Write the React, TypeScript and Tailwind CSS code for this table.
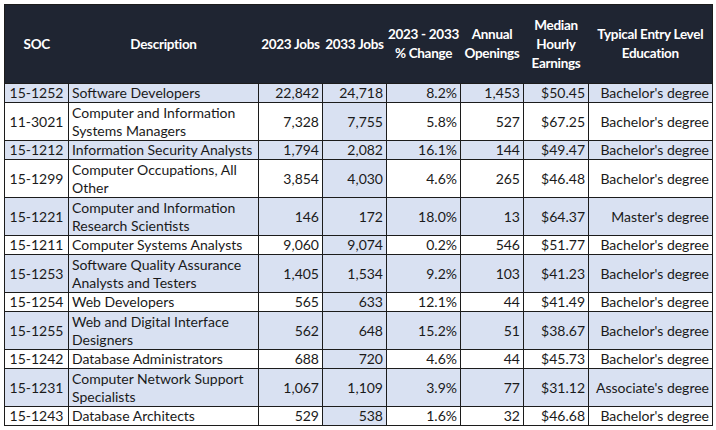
import React from "react";

type Row = {
  soc: string;
  desc: string[];
  jobs23: string;
  jobs33: string;
  change: string;
  openings: string;
  earnings: string;
  education: string;
};

const rows: Row[] = [
  { soc: "15-1252", desc: ["Software Developers"], jobs23: "22,842", jobs33: "24,718", change: "8.2%", openings: "1,453", earnings: "$50.45", education: "Bachelor's degree" },
  { soc: "11-3021", desc: ["Computer and Information", "Systems Managers"], jobs23: "7,328", jobs33: "7,755", change: "5.8%", openings: "527", earnings: "$67.25", education: "Bachelor's degree" },
  { soc: "15-1212", desc: ["Information Security Analysts"], jobs23: "1,794", jobs33: "2,082", change: "16.1%", openings: "144", earnings: "$49.47", education: "Bachelor's degree" },
  { soc: "15-1299", desc: ["Computer Occupations, All", "Other"], jobs23: "3,854", jobs33: "4,030", change: "4.6%", openings: "265", earnings: "$46.48", education: "Bachelor's degree" },
  { soc: "15-1221", desc: ["Computer and Information", "Research Scientists"], jobs23: "146", jobs33: "172", change: "18.0%", openings: "13", earnings: "$64.37", education: "Master's degree" },
  { soc: "15-1211", desc: ["Computer Systems Analysts"], jobs23: "9,060", jobs33: "9,074", change: "0.2%", openings: "546", earnings: "$51.77", education: "Bachelor's degree" },
  { soc: "15-1253", desc: ["Software Quality Assurance", "Analysts and Testers"], jobs23: "1,405", jobs33: "1,534", change: "9.2%", openings: "103", earnings: "$41.23", education: "Bachelor's degree" },
  { soc: "15-1254", desc: ["Web Developers"], jobs23: "565", jobs33: "633", change: "12.1%", openings: "44", earnings: "$41.49", education: "Bachelor's degree" },
  { soc: "15-1255", desc: ["Web and Digital Interface", "Designers"], jobs23: "562", jobs33: "648", change: "15.2%", openings: "51", earnings: "$38.67", education: "Bachelor's degree" },
  { soc: "15-1242", desc: ["Database Administrators"], jobs23: "688", jobs33: "720", change: "4.6%", openings: "44", earnings: "$45.73", education: "Bachelor's degree" },
  { soc: "15-1231", desc: ["Computer Network Support", "Specialists"], jobs23: "1,067", jobs33: "1,109", change: "3.9%", openings: "77", earnings: "$31.12", education: "Associate's degree" },
  { soc: "15-1243", desc: ["Database Architects"], jobs23: "529", jobs33: "538", change: "1.6%", openings: "32", earnings: "$46.68", education: "Bachelor's degree" },
];

const th =
  "font-bold text-white text-center align-middle leading-[19px] px-0 whitespace-nowrap text-[13.5px] tracking-[-0.3px]";
const td = "border border-[#1c1c1c] align-middle leading-[18px] p-0 whitespace-nowrap";

export default function App() {
  return (
    <div className="bg-white w-[716px] h-[430px] p-1 font-['Lato','Liberation_Sans',sans-serif] text-[14px] text-[#1a1a1a]">
      <table className="table-fixed border-collapse w-[708px] border border-[#1c1c1c]">
        <colgroup>
          <col className="w-[64px]" />
          <col className="w-[190px]" />
          <col className="w-[64px]" />
          <col className="w-[64px]" />
          <col className="w-[74px]" />
          <col className="w-[63px]" />
          <col className="w-[65px]" />
          <col className="w-[124px]" />
        </colgroup>
        <thead>
          <tr className="h-[79px] bg-[#1f2532]">
            <th className={th}>SOC</th>
            <th className={th}>Description</th>
            <th className={th}>2023 Jobs</th>
            <th className={th}>2033 Jobs</th>
            <th className={th}>
              2023 - 2033
              <br />% Change
            </th>
            <th className={th}>
              Annual
              <br />
              Openings
            </th>
            <th className={th}>
              Median
              <br />
              Hourly
              <br />
              Earnings
            </th>
            <th className={th}>
              Typical Entry Level
              <br />
              Education
            </th>
          </tr>
        </thead>
        <tbody>
          {rows.map((r, i) => {
            const banded = i % 2 === 0;
            const bg = banded ? "bg-[#d9e1f2]" : "bg-white";
            const h = r.desc.length > 1 ? "h-[38px]" : "h-[19px]";
            return (
              <tr key={r.soc} className={`${bg} ${h}`}>
                <td className={`${td} text-center`}>{r.soc}</td>
                <td className={`${td} text-left pl-[3px]`}>
                  {r.desc.map((line, j) => (
                    <div key={j}>{line}</div>
                  ))}
                </td>
                <td className={`${td} text-right pr-[3px]`}>{r.jobs23}</td>
                <td className={`${td} text-right pr-[3px] bg-[#d9e1f2]`}>{r.jobs33}</td>
                <td className={`${td} text-right pr-[3px]`}>{r.change}</td>
                <td className={`${td} text-right pr-[3px]`}>{r.openings}</td>
                <td className={`${td} text-right pr-[3px]`}>{r.earnings}</td>
                <td className={`${td} text-right pr-[3px]`}>{r.education}</td>
              </tr>
            );
          })}
        </tbody>
      </table>
    </div>
  );
}
